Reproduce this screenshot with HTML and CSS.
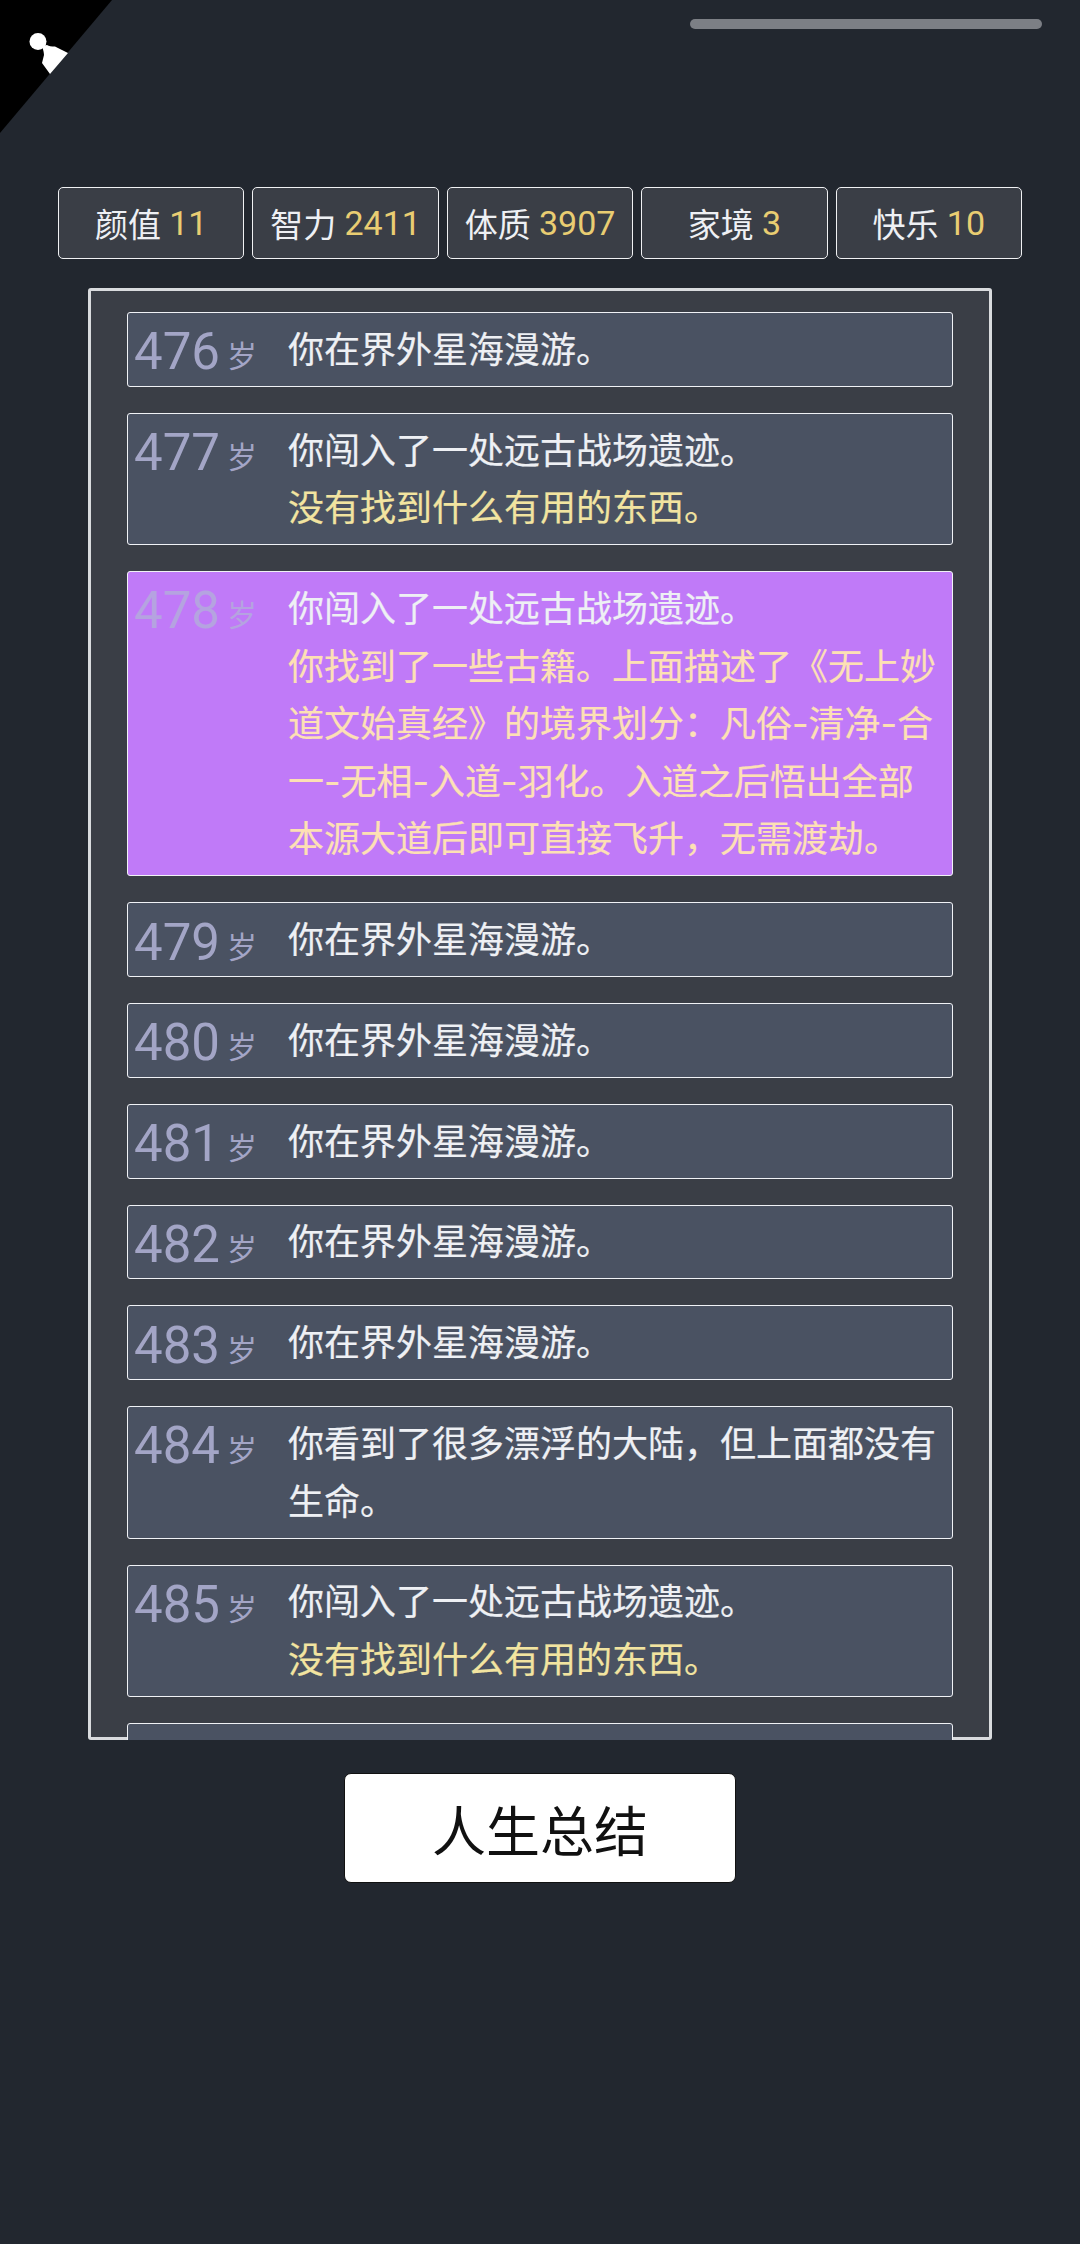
FILE: index.html
```html
<!DOCTYPE html>
<html lang="zh-CN">

<head>
    <title>人生重开模拟器</title>
    <meta name="viewport" content="width=device-width, initial-scale=1.0" />
    <link rel="stylesheet" href="styles.css">
</head>

<body>
    <div class="corner">
        <svg width="112" height="133" viewBox="0 0 112 133">
            <polygon points="0,0 112,0 0,133" fill="#000" />
            <circle cx="38" cy="41.500" r="8.500" fill="#fff" />
            <path fill="#fff" d="M42 46l5-1c2 1.500 4 1.500 8 1.500l13 6.500-18 21-8-11 2-8c0-3-1-5-2-10z" />
        </svg>
    </div>

    <div class="topbar"><span class="scroll-thumb"></span></div>

    <div class="props">
        <div class="prop">颜值 <span class="val">11</span></div>
        <div class="prop">智力 <span class="val">2411</span></div>
        <div class="prop">体质 <span class="val">3907</span></div>
        <div class="prop">家境 <span class="val">3</span></div>
        <div class="prop">快乐 <span class="val">10</span></div>
    </div>

    <ul class="trajectory">
        <li class="row">
            <span class="age"><span class="num">476</span><span class="unit">岁</span></span>
            <div class="text">你在界外星海漫游。</div>
        </li>
        <li class="row">
            <span class="age"><span class="num">477</span><span class="unit">岁</span></span>
            <div class="text">你闯入了一处远古战场遗迹。<br><span class="result">没有找到什么有用的东西。</span></div>
        </li>
        <li class="row grade3">
            <span class="age"><span class="num">478</span><span class="unit">岁</span></span>
            <div class="text">你闯入了一处远古战场遗迹。<br><span class="result">你找到了一些古籍。上面描述了《无上妙道文始真经》的境界划分：凡俗-清净-合一-无相-入道-羽化。入道之后悟出全部本源大道后即可直接飞升，无需渡劫。</span></div>
        </li>
        <li class="row">
            <span class="age"><span class="num">479</span><span class="unit">岁</span></span>
            <div class="text">你在界外星海漫游。</div>
        </li>
        <li class="row">
            <span class="age"><span class="num">480</span><span class="unit">岁</span></span>
            <div class="text">你在界外星海漫游。</div>
        </li>
        <li class="row">
            <span class="age"><span class="num">481</span><span class="unit">岁</span></span>
            <div class="text">你在界外星海漫游。</div>
        </li>
        <li class="row">
            <span class="age"><span class="num">482</span><span class="unit">岁</span></span>
            <div class="text">你在界外星海漫游。</div>
        </li>
        <li class="row">
            <span class="age"><span class="num">483</span><span class="unit">岁</span></span>
            <div class="text">你在界外星海漫游。</div>
        </li>
        <li class="row">
            <span class="age"><span class="num">484</span><span class="unit">岁</span></span>
            <div class="text">你看到了很多漂浮的大陆，但上面都没有生命。</div>
        </li>
        <li class="row">
            <span class="age"><span class="num">485</span><span class="unit">岁</span></span>
            <div class="text">你闯入了一处远古战场遗迹。<br><span class="result">没有找到什么有用的东西。</span></div>
        </li>
        <li class="row row-empty"></li>
    </ul>

    <button class="summary">人生总结</button>
</body>

</html>
```

FILE: styles.css
```css
html {
    font-family: "Noto Sans CJK SC", "Noto Sans", sans-serif;
    color: #eef0f4;
    background-color: #22272f;
}

body {
    margin: 0;
    height: 2244px;
    overflow: hidden;
}

.corner {
    position: absolute;
    top: 0;
    left: 0;
    line-height: 0;
}

.topbar {
    display: flex;
    justify-content: flex-end;
    padding: 19px 38px 0 0;
}

.scroll-thumb {
    width: 352px;
    height: 10px;
    border-radius: 5px;
    background-color: #7c7f85;
}

.props {
    display: flex;
    gap: 8px;
    margin: 158px 58px 0 58px;
}

.prop {
    flex: 1;
    height: 72px;
    box-sizing: border-box;
    display: flex;
    align-items: center;
    justify-content: center;
    gap: 0.25em;
    font-size: 33px;
    border: 1px solid #f0f1f3;
    border-radius: 5px;
    background-color: #3a3e46;
    white-space: nowrap;
}

.val {
    color: #e9cd72;
    font-family: Roboto, sans-serif;
    font-size: 34px;
}

.trajectory {
    list-style-type: none;
    box-sizing: border-box;
    height: 1452px;
    margin: 29px 88px 0 88px;
    padding: 24px 39px 0 39px;
    overflow: hidden;
    display: flex;
    flex-direction: column;
    gap: 26px;
    background-color: #3a3e46;
    border-radius: 3px;
    /* inset so the rows paint over it at the bottom edge */
    box-shadow: inset 0 0 0 3px #d9dbde;
}

.row {
    display: flex;
    flex: none;
    padding: 8.800px 11px 6.400px 6px;
    border: 1px solid #f0f2f6;
    border-radius: 3px;
    background-color: #4a5262;
}

.row-empty {
    height: 57.600px;
}

.age {
    flex: none;
    box-sizing: border-box;
    width: 154px;
    height: 57.600px;
    padding-top: 1.400px;
    color: #a3a5c6;
    white-space: nowrap;
}

.num {
    font-family: Roboto, sans-serif;
    font-size: 51px;
    line-height: 57.600px;
}

.unit {
    margin-left: 7px;
    font-size: 30px;
    vertical-align: 2px;
}

.text {
    flex: 1;
    /* Inter only for the hyphens, they are wider than the CJK font's */
    font-family: Inter, "Noto Sans CJK SC", sans-serif;
    font-size: 36px;
    line-height: 57.600px;
    -webkit-text-stroke: 0.2px;
}

.result {
    color: #f2e4a0;
}

.grade3 {
    background-color: #c07af8;
}

.grade3 .age {
    color: #b5a3e0;
}

.grade3 .result {
    color: #fde0b4;
}

.summary {
    display: block;
    width: 392px;
    height: 110px;
    margin: 33px auto 0 auto;
    font-family: inherit;
    font-size: 54px;
    color: #111;
    background-color: #fff;
    border: 1px solid #111;
    border-radius: 7px;
}
```
